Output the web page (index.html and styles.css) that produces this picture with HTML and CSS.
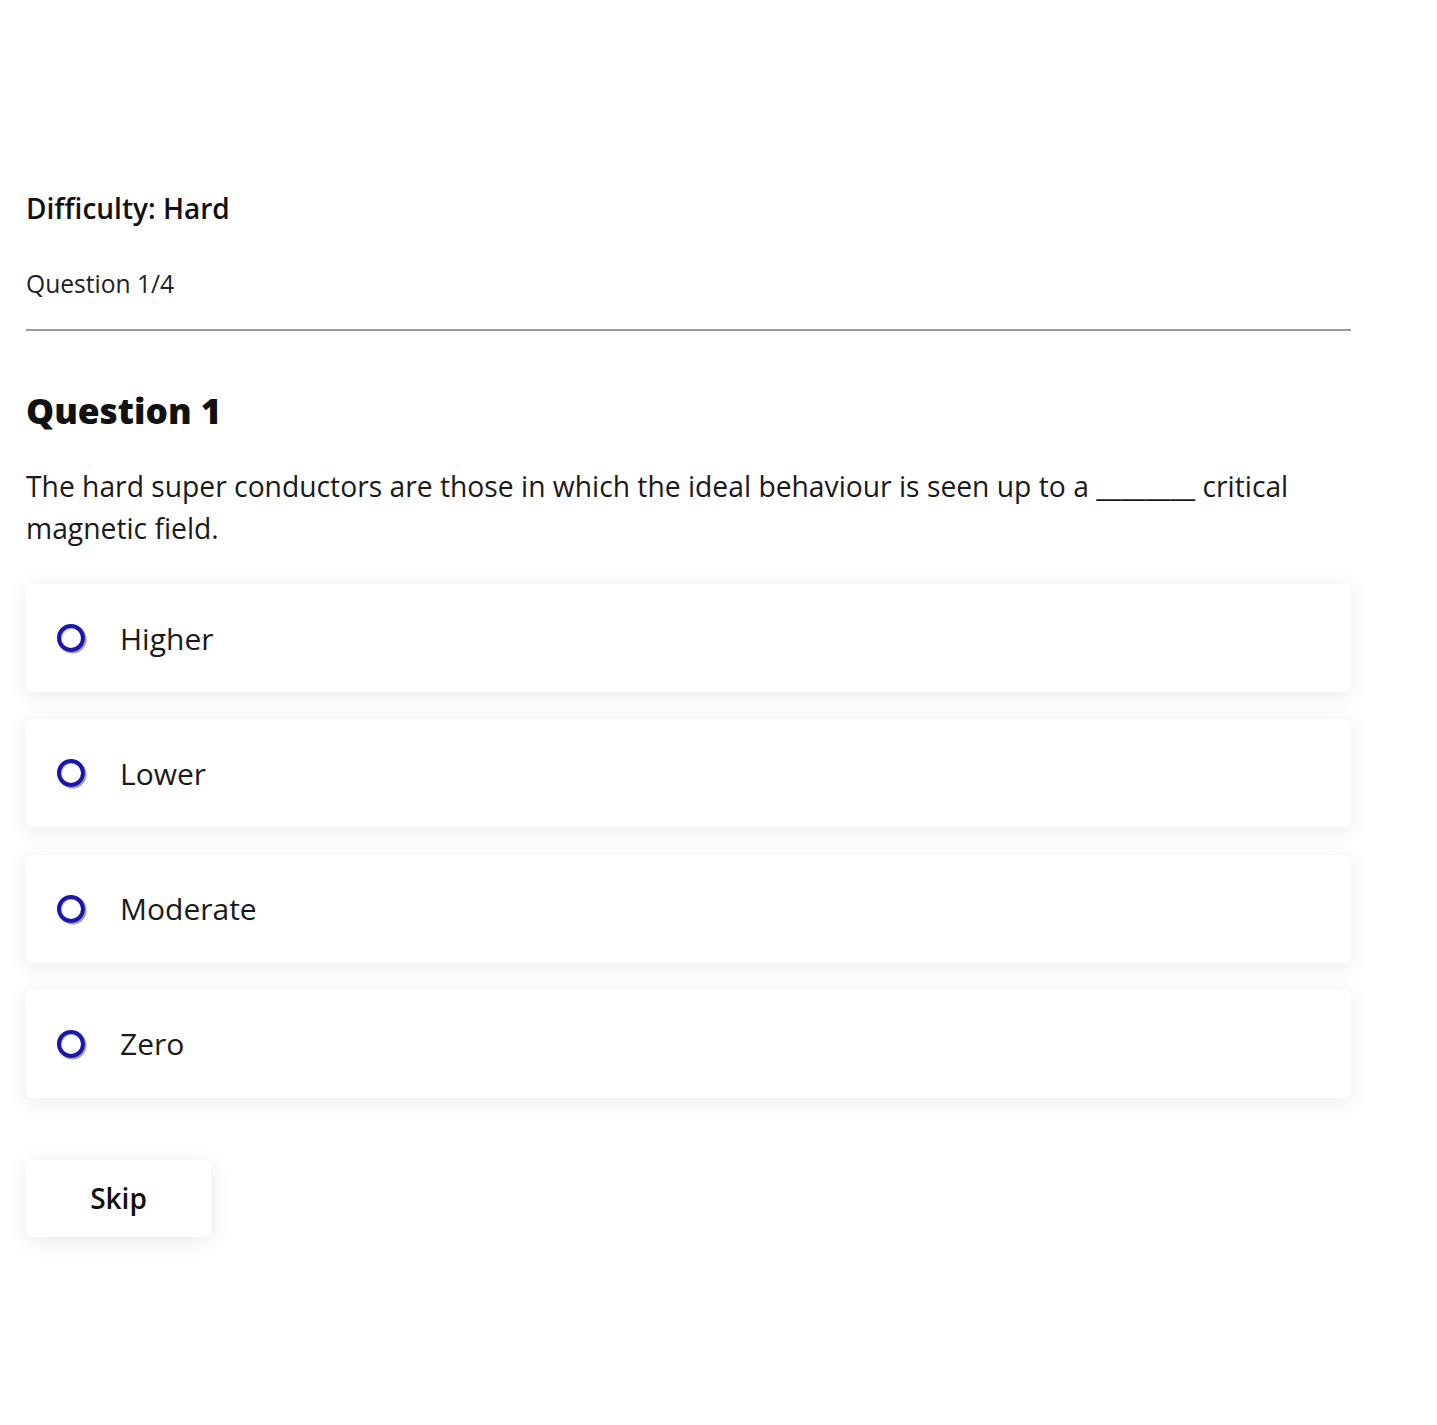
FILE: index.html
```html
<!DOCTYPE html>
<html>
<head>
<meta charset="utf-8">
<link rel="stylesheet" href="styles.css">
</head>
<body>
<main class="quiz">
  <div class="difficulty">Difficulty: Hard</div>
  <div class="progress">Question 1/4</div>
  <hr class="divider">
  <h1 class="qtitle">Question 1</h1>
  <p class="qtext">The hard super conductors are those in which the ideal behaviour is seen up to a ________ critical magnetic field.</p>
  <div class="options">
    <label class="option"><span class="radio"></span><span class="label">Higher</span></label>
    <label class="option"><span class="radio"></span><span class="label">Lower</span></label>
    <label class="option"><span class="radio"></span><span class="label">Moderate</span></label>
    <label class="option"><span class="radio"></span><span class="label">Zero</span></label>
  </div>
  <button class="skip">Skip</button>
</main>
</body>
</html>
```
FILE: styles.css
```css
html, body {
  margin: 0;
  padding: 0;
  background: #fff;
}
body {
  font-family: "Open Sans", "Liberation Sans", sans-serif;
  color: #111;
  min-height: 1425px;
}
.quiz {
  width: 1325px;
  margin-left: 26px;
  padding-top: 188px;
  padding-bottom: 120px;
}
.difficulty {
  font-size: 28px;
  font-weight: 600;
  line-height: 40px;
}
.progress {
  font-size: 24.6px;
  line-height: 34px;
  margin-top: 39px;
  color: #222;
}
.divider {
  border: 0;
  height: 2px;
  background: #9a9a9a;
  margin: 28px 0 0 0;
}
.qtitle {
  font-size: 35.3px;
  font-weight: 800;
  line-height: 46px;
  margin: 56px 0 0 0;
}
.qtext {
  font-size: 28.25px;
  line-height: 42px;
  margin: 32px 0 0 0;
  color: #1a1a1a;
}
.options {
  display: flex;
  flex-direction: column;
  gap: 27.3px;
  margin-top: 35px;
}
.option {
  display: flex;
  align-items: center;
  height: 108px;
  background: #fff;
  border-radius: 6px;
  box-shadow: 0 4px 22px rgba(0,0,0,0.085);
  padding-left: 31px;
  box-sizing: border-box;
}
.radio {
  width: 20px;
  height: 20px;
  border: 4px solid #1b16aa;
  border-radius: 50%;
  box-shadow: 1.5px 1.5px 1px 0 rgba(0,0,0,0.4), inset 1px 1px 1px rgba(0,0,0,0.25);
  flex: none;
}
.label {
  font-size: 30px;
  margin-left: 35px;
  color: #1a1a1a;
}
.skip {
  display: block;
  margin-top: 62px;
  width: 185px;
  height: 77px;
  border: 0;
  border-radius: 6px;
  background: #fff;
  box-shadow: 0 4px 22px rgba(0,0,0,0.085);
  font-family: "Open Sans", "Liberation Sans", sans-serif;
  font-size: 28px;
  font-weight: 600;
  color: #111;
  padding: 0;
}
```
